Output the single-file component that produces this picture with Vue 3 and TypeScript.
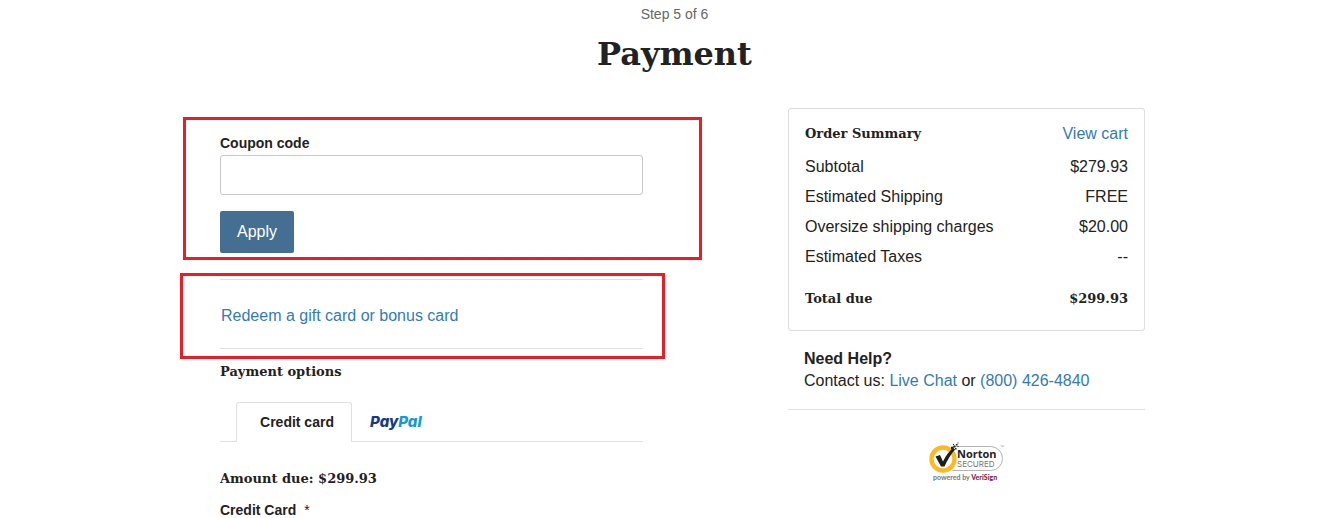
<script setup lang="ts">
import { ref } from 'vue'

interface SummaryRow {
  label: string
  value: string
}

const coupon = ref('')
const rows: SummaryRow[] = [
  { label: 'Subtotal', value: '$279.93' },
  { label: 'Estimated Shipping', value: 'FREE' },
  { label: 'Oversize shipping charges', value: '$20.00' },
  { label: 'Estimated Taxes', value: '--' },
]
const total = '$299.93'
</script>

<template>
  <div class="page">
    <header class="head">
      <p class="step">Step 5 of 6</p>
      <h1 class="title">Payment</h1>
    </header>

    <main class="columns">
      <div class="left">
        <form class="coupon" @submit.prevent>
          <label class="label" for="coupon">Coupon code</label>
          <input id="coupon" v-model="coupon" class="field" type="text" />
          <button class="apply" type="submit">Apply</button>
          <span class="mark mark-coupon" aria-hidden="true"></span>
        </form>

        <section class="redeem">
          <a class="link" href="#redeem">Redeem a gift card or bonus card</a>
          <span class="mark mark-redeem" aria-hidden="true"></span>
        </section>

        <section>
          <h2 class="heading options">Payment options</h2>
          <div class="tabs" role="tablist">
            <button class="tab active" type="button" role="tab" aria-selected="true">Credit card</button>
            <button class="tab paypal" type="button" role="tab" aria-selected="false">
              <span class="pay">Pay</span><span class="pal">Pal</span>
            </button>
          </div>
          <h2 class="heading amount">Amount due: {{ total }}</h2>
          <p class="label card-label">Credit Card <span class="star">*</span></p>
        </section>
      </div>

      <aside>
        <section class="summary">
          <div class="row first">
            <h2 class="heading">Order Summary</h2>
            <a class="link" href="#cart">View cart</a>
          </div>
          <div v-for="row in rows" :key="row.label" class="row">
            <span>{{ row.label }}</span>
            <span>{{ row.value }}</span>
          </div>
          <div class="row total heading">
            <span>Total due</span>
            <span>{{ total }}</span>
          </div>
        </section>

        <section class="help">
          <strong>Need Help?</strong>
          <p>
            Contact us: <a class="link" href="#chat">Live Chat</a> or
            <a class="link" href="tel:8004264840">(800) 426-4840</a>
          </p>
        </section>

        <svg class="seal" width="76" height="44" viewBox="0 0 76 44" role="img" aria-label="Norton Secured, powered by VeriSign">
          <rect x="8" y="4.500" width="65.500" height="24" rx="12" fill="#fff" stroke="#b4b4b4" />
          <circle cx="14" cy="17" r="15" fill="#fff" />
          <circle cx="14" cy="17" r="11.500" fill="#fff" stroke="#fdb924" stroke-width="4.400" />
          <path d="M6.500 14.500l4.500-1.500 3 6.500C17 13.500 20 9.500 24 6l2.200 1.500C21.500 12.500 18.500 18 15.500 24.500h-3.500z" fill="#1d1d1b" />
          <path d="M22 5h2.500v2.500H22zM24.500 3.500h2v2h-2zM26 6h1.500v1.500H26zM27 2h1.500v1.500H27zM28.500 4h1v1h-1zM24 2h1v1h-1zM28.500 0.500h1v1h-1z" fill="#1d1d1b" />
          <text x="28" y="16" class="norton">Norton</text>
          <text x="28" y="25" class="secured">SECURED</text>
          <text x="71" y="6" class="tm">™</text>
          <text x="4" y="38" class="powered">powered by <tspan class="verisign">VeriSign</tspan></text>
        </svg>
      </aside>
    </main>
  </div>
</template>

<style>
body {
  margin: 0;
  background: #fff;
}
</style>

<style scoped>
.page {
  box-sizing: border-box;
  height: 100vh;
  overflow: hidden;
  font: 16px/22px "Liberation Sans", Arial, sans-serif;
  color: #222;
}
p, h1, h2 {
  margin: 0;
}
.head {
  padding: 4px 0 0 9px;
  text-align: center;
}
.step {
  font-size: 14px;
  line-height: 20px;
  color: #666;
}
.title {
  margin-top: 6px;
  font: bold 32px/48px "DejaVu Serif", serif;
}
.columns {
  display: grid;
  grid-template-columns: 423fr 357fr;
  gap: 145px;
  align-items: start;
  box-sizing: border-box;
  max-width: 950px;
  margin: 30px auto 0;
  padding-left: 25px;
}
.coupon {
  position: relative;
  padding: 25px 0 26px;
}
.label {
  display: block;
  font-size: 14px;
  line-height: 20px;
  font-weight: bold;
}
.field {
  display: block;
  box-sizing: border-box;
  width: 100%;
  height: 40px;
  margin: 2px 0 16px;
  padding: 0 12px;
  border: 1px solid #c8c8c8;
  border-radius: 3px;
  font: inherit;
  color: inherit;
}
.apply {
  display: block;
  height: 42px;
  padding: 0 17px;
  border: 0;
  border-radius: 2px;
  background: #456f92;
  color: #fff;
  font: inherit;
}
.mark {
  position: absolute;
  border: 3px solid #ed1c24;
  pointer-events: none;
}
.mark-coupon {
  inset: 9px -59px 19px -37px;
}
.mark-redeem {
  inset: -7px -22px -11px -40px;
}
.redeem {
  position: relative;
  padding: 25px 1px 21px;
  border: solid #e0e0e0;
  border-width: 1px 0;
}
.link {
  color: #337ab7;
  text-decoration: none;
}
.heading {
  font: bold 13px/22px "DejaVu Serif", serif;
}
.options {
  margin-top: 12px;
}
.tabs {
  display: flex;
  height: 39px;
  margin-top: 19px;
  padding-left: 16px;
  border-bottom: 1px solid #e0e0e0;
}
.tab {
  box-sizing: border-box;
  height: 40px;
  border: 0;
  background: #fff;
  color: inherit;
  font: bold 14px/20px "Liberation Sans", Arial, sans-serif;
}
.active {
  width: 116px;
  padding: 0 0 1px 6px;
  border: 1px solid #e0e0e0;
  border-bottom: 0;
  border-radius: 3px 3px 0 0;
}
.paypal {
  height: 39px;
  padding: 0 18px;
  font: italic 800 15px/20px Inter, sans-serif;
}
.pay {
  color: #173a85;
}
.pal {
  color: #139ad6;
}
.amount {
  margin-top: 26px;
}
.card-label {
  margin-top: 10px;
}
.star {
  margin-left: 4px;
  font-weight: normal;
}
.summary {
  padding: 14px 16px 20px;
  border: 1px solid #dcdcdc;
  border-radius: 3px;
}
.row {
  display: flex;
  justify-content: space-between;
  margin-bottom: 8px;
}
.first {
  margin-bottom: 11px;
}
.total {
  margin: 20px 0 0;
}
.help {
  padding: 17px 16px;
  border-bottom: 1px solid #e0e0e0;
}
.seal {
  display: block;
  margin: 32px 0 0 141px;
}
.norton {
  font: bold 11px/11px "Open Sans", sans-serif;
  fill: #222;
}
.secured {
  font: 8px/8px Inter, sans-serif;
  fill: #777;
}
.tm {
  font: 4px "Liberation Sans", sans-serif;
  fill: #888;
}
.powered {
  font: bold 7px Lato, sans-serif;
  fill: #777;
}
.verisign {
  font-weight: 900;
  fill: #8c1a4b;
}
</style>
